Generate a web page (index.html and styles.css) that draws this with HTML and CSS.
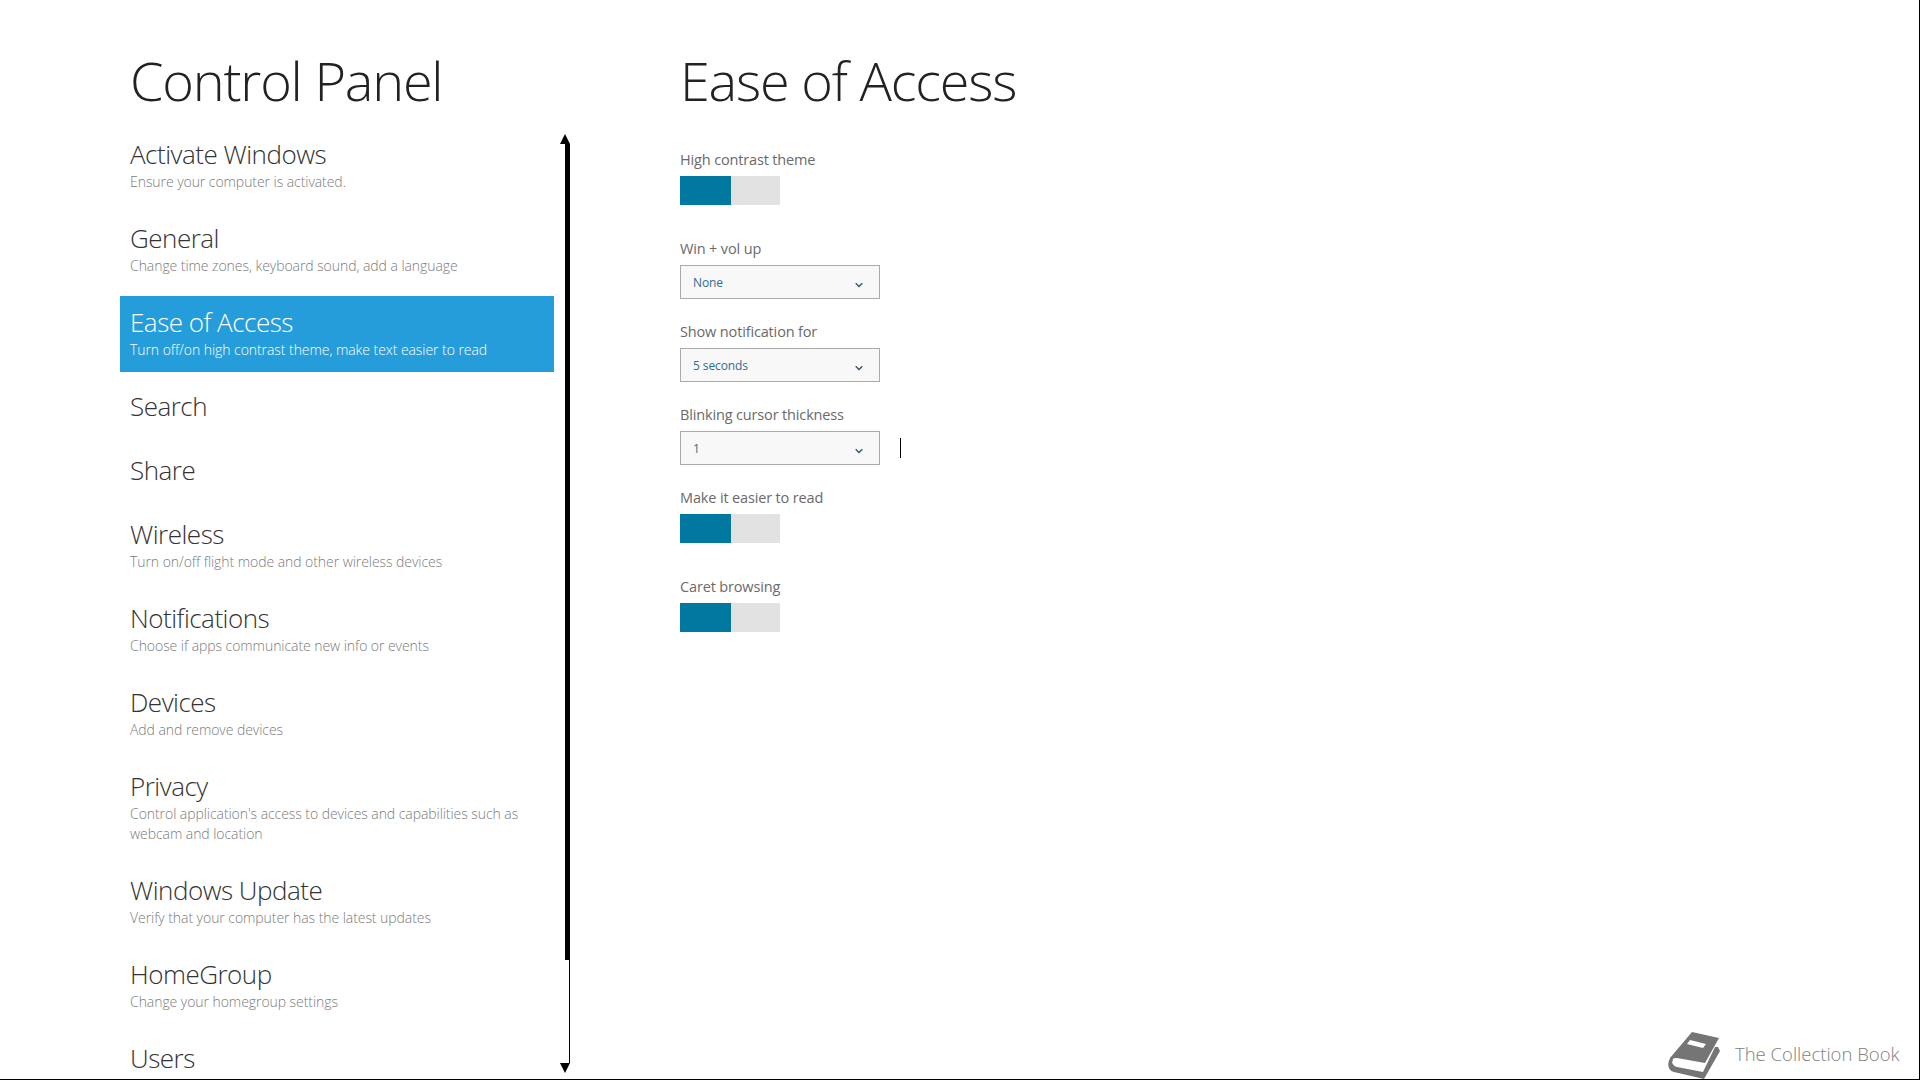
FILE: index.html
```
<!DOCTYPE html>
<html lang="en">
<head>
<meta charset="utf-8">
<title>Control Panel</title>
<link rel="stylesheet" href="styles.css">
</head>
<body>
<div class="page">
  <aside class="sidebar">
    <h1 class="page-title side-title">Control Panel</h1>
    <div class="list-wrap">
      <ul class="list">
        <li class="item"><div class="item-name">Activate Windows</div><div class="item-desc">Ensure your computer is activated.</div></li>
        <li class="item"><div class="item-name">General</div><div class="item-desc">Change time zones, keyboard sound, add a language</div></li>
        <li class="item selected"><div class="item-name">Ease of Access</div><div class="item-desc">Turn off/on high contrast theme, make text easier to read</div></li>
        <li class="item plain"><div class="item-name">Search</div></li>
        <li class="item plain"><div class="item-name">Share</div></li>
        <li class="item"><div class="item-name">Wireless</div><div class="item-desc">Turn on/off flight mode and other wireless devices</div></li>
        <li class="item"><div class="item-name">Notifications</div><div class="item-desc">Choose if apps communicate new info or events</div></li>
        <li class="item"><div class="item-name">Devices</div><div class="item-desc">Add and remove devices</div></li>
        <li class="item two"><div class="item-name">Privacy</div><div class="item-desc">Control application's access to devices and capabilities such as webcam and location</div></li>
        <li class="item"><div class="item-name">Windows Update</div><div class="item-desc">Verify that your computer has the latest updates</div></li>
        <li class="item"><div class="item-name">HomeGroup</div><div class="item-desc">Change your homegroup settings</div></li>
        <li class="item plain"><div class="item-name">Users</div></li>
      </ul>
      <div class="scrollbar">
        <div class="arrow arrow-up"></div>
        <div class="thumb"></div>
        <div class="rail"></div>
        <div class="arrow arrow-down"></div>
      </div>
    </div>
  </aside>
  <main class="content">
    <h1 class="page-title">Ease of Access</h1>
    <div class="settings">
      <section class="setting setting-toggle">
        <div class="label">High contrast theme</div>
        <div class="toggle"><span class="toggle-on"></span><span class="toggle-off"></span></div>
      </section>
      <section class="setting setting-select">
        <div class="label">Win + vol up</div>
        <div class="select"><span>None</span><svg class="chev" viewBox="0 0 8 6"><path d="M.7 1.2 4 4.4l3.3-3.2"/></svg></div>
      </section>
      <section class="setting setting-select">
        <div class="label">Show notification for</div>
        <div class="select"><span>5 seconds</span><svg class="chev" viewBox="0 0 8 6"><path d="M.7 1.2 4 4.4l3.3-3.2"/></svg></div>
      </section>
      <section class="setting setting-select">
        <div class="label">Blinking cursor thickness</div>
        <div class="select-row">
          <div class="select"><span>1</span><svg class="chev" viewBox="0 0 8 6"><path d="M.7 1.2 4 4.4l3.3-3.2"/></svg></div>
          <div class="caret"></div>
        </div>
      </section>
      <section class="setting setting-toggle">
        <div class="label">Make it easier to read</div>
        <div class="toggle"><span class="toggle-on"></span><span class="toggle-off"></span></div>
      </section>
      <section class="setting setting-toggle">
        <div class="label">Caret browsing</div>
        <div class="toggle"><span class="toggle-on"></span><span class="toggle-off"></span></div>
      </section>
    </div>
  </main>
  <div class="brand">
    <svg class="brand-icon" viewBox="0 0 52 47">
      <path class="book" d="M24 0 51 6 37 31 9 26C6 25.500 4 27 3 29L2 26Z"/>
      <path class="book" d="M3 25C-1 30-1 38 6 40L36 47 52 19 50 15 47 15 35 40 9 35C5 34 3 31 5 28Z"/>
      <path class="book-label" d="M22 8 38 12 35 16 19 12Z"/>
    </svg>
    <span class="brand-text">The Collection Book</span>
  </div>
</div>
</body>
</html>
```
FILE: styles.css
```
* { box-sizing: border-box; }
html, body { margin: 0; padding: 0; background: #fff; }
body { font-family: "Open Sans", "Liberation Sans", sans-serif; }
.page {
  position: relative;
  display: flex;
  width: 1920px;
  height: 1080px;
  overflow: hidden;
  border-right: 1px solid #000;
  border-bottom: 1px solid #000;
}
.page-title {
  margin: 0;
  height: 128px;
  padding-top: 41px;
  font-size: 54px;
  line-height: 78px;
  font-weight: 300;
  color: #222;
  letter-spacing: -1.2px;
}
.sidebar { width: 680px; flex: none; padding-left: 120px; display: flex; flex-direction: column; min-height: 0; }
.side-title { padding-left: 10px; }
.list-wrap { display: flex; flex: 1; min-height: 0; }
.list { list-style: none; margin: 0; padding: 0; width: 434px; flex: none; overflow: hidden; display: flex; flex-direction: column; gap: 8px; }
.item { flex: none; height: 76px; padding: 8px 10px 0; color: #222; }
.item.plain { height: 56px; }
.item.two { height: 96px; }
.item-name { font-size: 26px; line-height: 36px; font-weight: 300; letter-spacing: -.5px; color: #333; white-space: nowrap; }
.item-desc { font-size: 14px; line-height: 20px; font-weight: 300; color: #7b7b7b; letter-spacing: -.06px; }
.item.selected { background: #269ddb; }
.item.selected .item-name, .item.selected .item-desc { color: #fff; }
.scrollbar { width: 10px; margin-left: 6px; display: flex; flex-direction: column; align-items: flex-end; height: 939px; margin-top: 6px; }
.arrow { width: 0; height: 0; border-left: 5px solid transparent; border-right: 5px solid transparent; flex: none; }
.arrow-up { border-bottom: 10px solid #000; }
.arrow-down { border-top: 10px solid #000; }
.thumb { width: 5px; height: 816px; background: #000; flex: none; }
.rail { width: 1px; flex: 1; background: #000; }
.content { flex: 1; }
.settings { display: flex; flex-direction: column; }
.setting { display: flex; flex-direction: column; }
.setting-toggle { height: 89px; }
.setting-select { height: 83px; }
.label { font-size: 14.5px; line-height: 21px; color: #6a6a6a; padding-top: 21px; height: 48px; letter-spacing: -.15px; }
.toggle { display: flex; width: 100px; height: 29px; }
.toggle-on { width: 51px; background: #00789f; }
.toggle-off { width: 49px; background: #e2e2e2; }
.select-row { display: flex; align-items: center; }
.select { width: 200px; height: 34px; background: #f8f8f8; border: 1px solid #ababab; display: flex; align-items: center; justify-content: space-between; padding: 0 16px 0 12px; font-size: 12px; letter-spacing: -.1px; color: #2d6f8c; }
.chev { width: 8px; height: 6px; margin-top: 5px; }
.chev path { fill: none; stroke: #35586a; stroke-width: 1.4; }
.caret { width: 1px; height: 20px; background: #000; margin-left: 20px; }
.brand { position: absolute; left: 1668px; top: 1032px; display: flex; align-items: flex-start; gap: 15px; height: 47px; }
.brand-icon { width: 52px; height: 47px; }
.book { fill: #757575; }
.book-label { fill: #fff; }
.brand-text { font-size: 18.5px; line-height: 25px; padding-top: 9px; color: #808080; font-weight: 300; }
```
